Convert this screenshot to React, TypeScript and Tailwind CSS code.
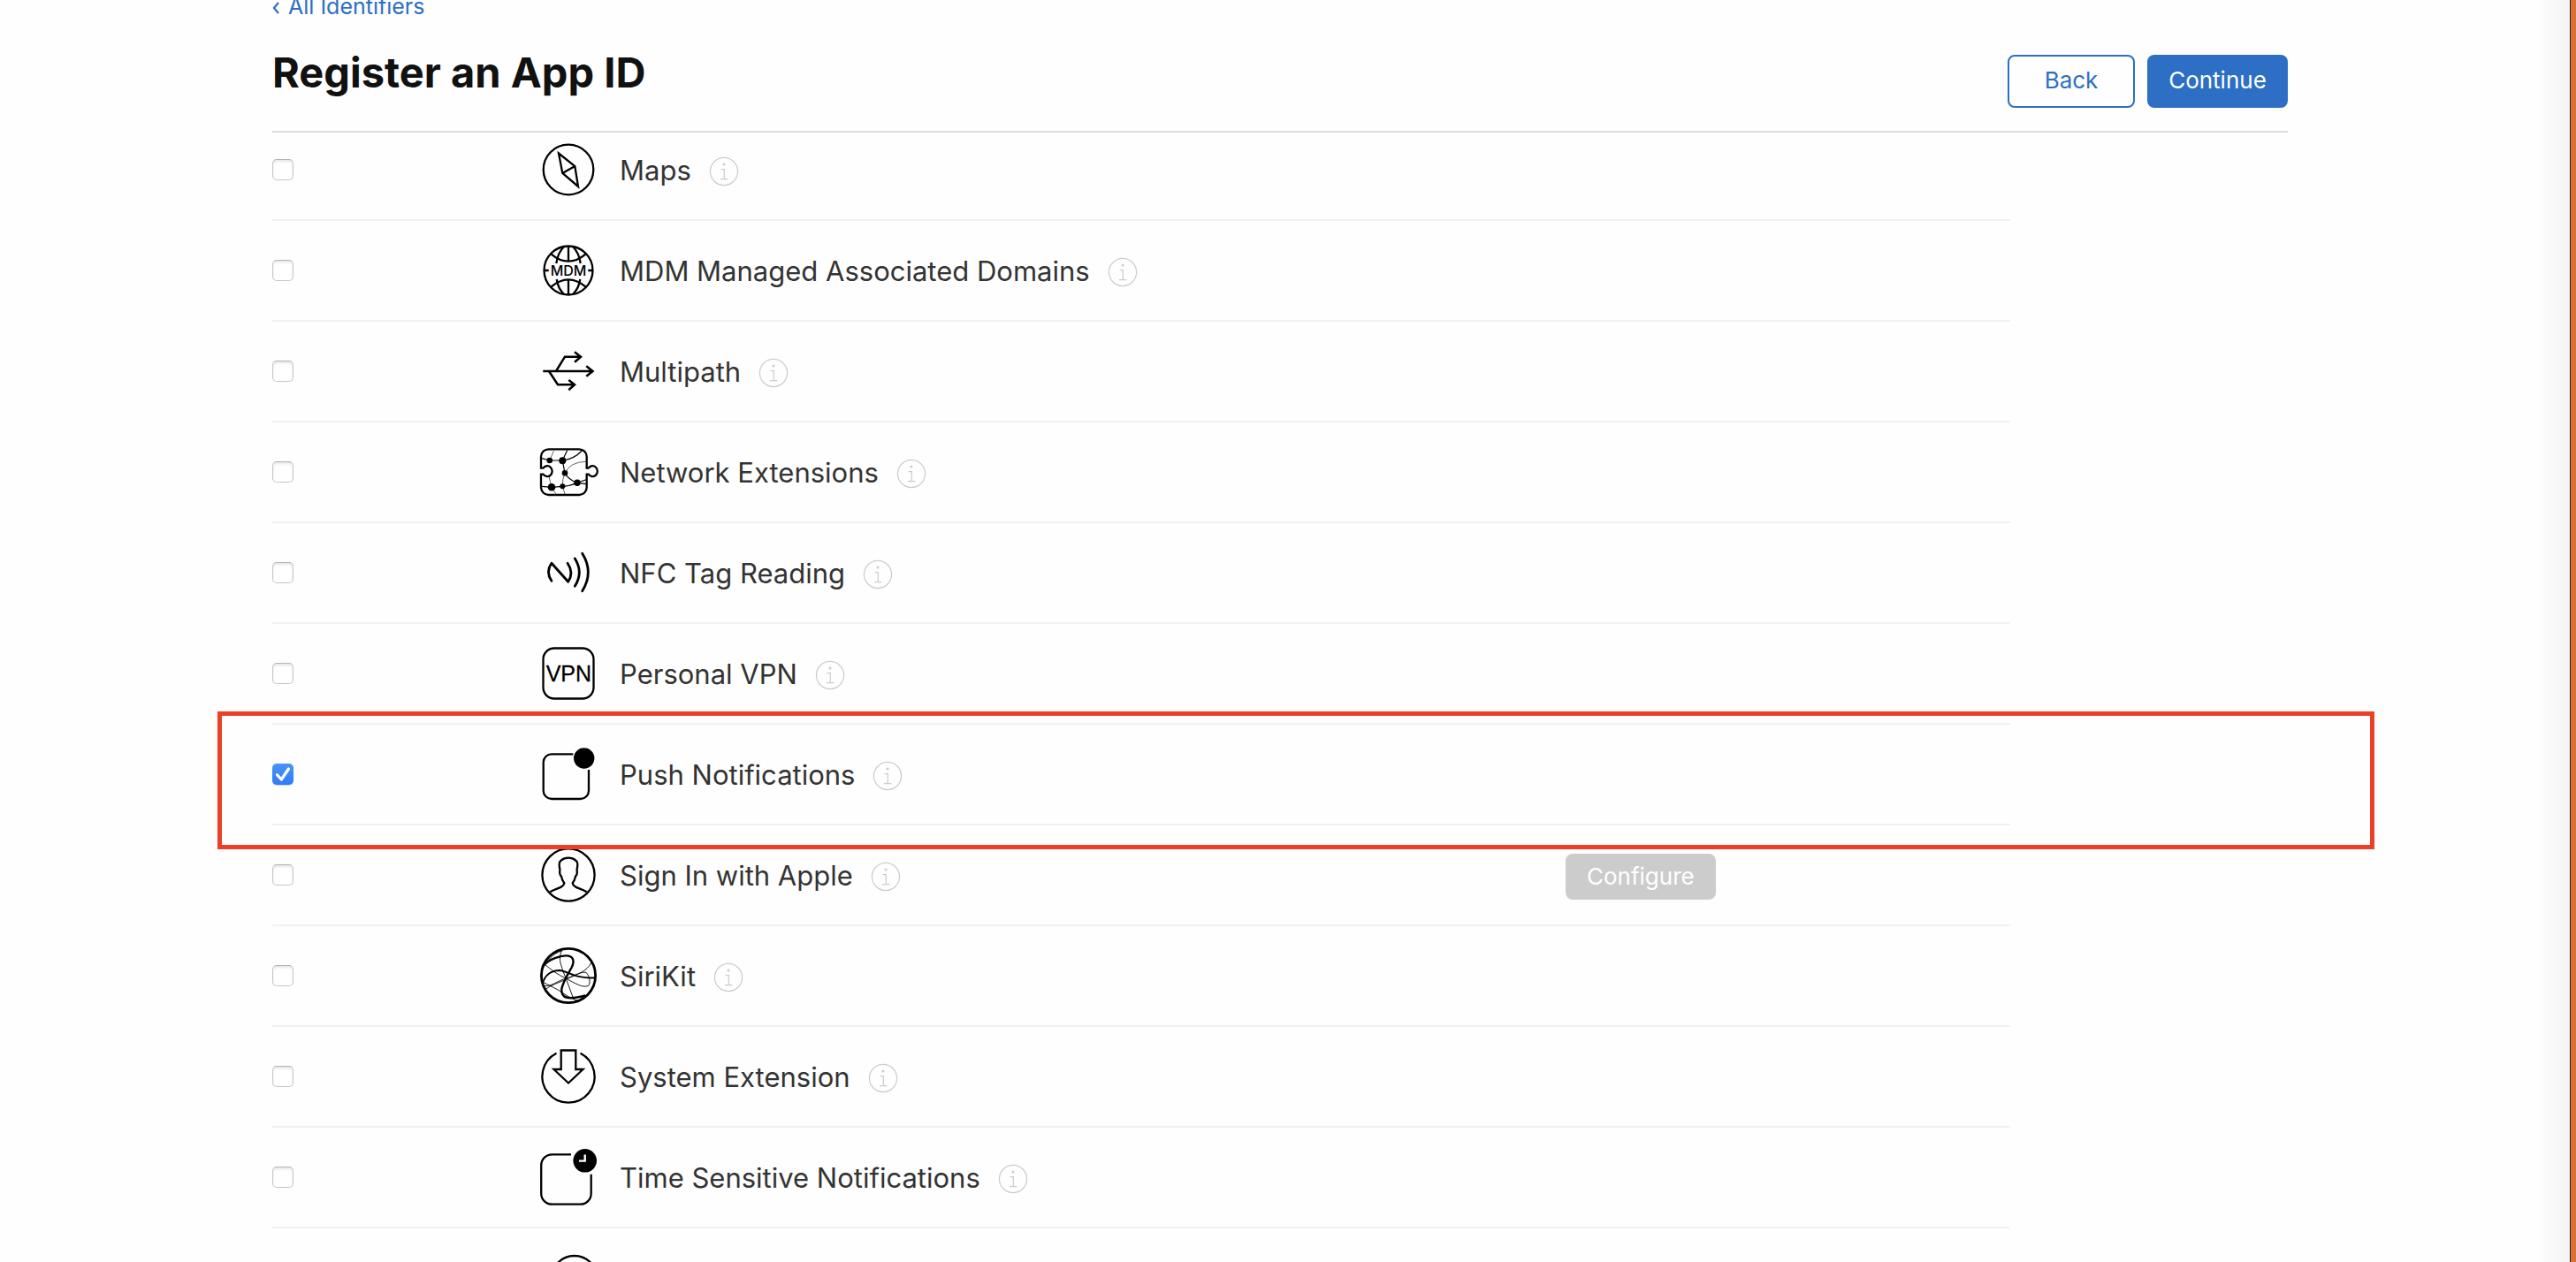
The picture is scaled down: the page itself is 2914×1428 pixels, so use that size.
import { useState, type ReactNode } from "react";

type Capability = {
  id: string;
  name: string;
  icon: ReactNode;
  configurable?: boolean;
  highlighted?: boolean;
};

function Glyph({ children, width = 2.3 }: { children: ReactNode; width?: number }) {
  return (
    <svg
      viewBox="0 0 64 64"
      className="size-16 shrink-0 overflow-visible"
      fill="none"
      stroke="#000"
      strokeWidth={width}
      aria-hidden="true"
    >
      {children}
    </svg>
  );
}

const MapsIcon = (
  <Glyph>
    <circle cx="32" cy="32" r="28.3" />
    <path d="M21 13.5 39.3 28 43 51 25.3 36Z M25.3 36 39.3 28" />
  </Glyph>
);

const MdmIcon = (
  <Glyph>
    <circle cx="32" cy="32" r="27.5" />
    <path d="M32 4.5V22M32 42V59.5M12.3 13.3Q32 30 51.7 13.3M12.3 50.7Q32 34 51.7 50.7" />
    <path d="M27 5Q20 12 18.3 24M37 5Q44 12 45.7 24M27 59Q20 52 18.7 42M37 59Q44 52 45.3 42" />
    <path d="M4 32H9.7M54.3 32H60" />
    <text
      x="32"
      y="38"
      textAnchor="middle"
      fill="#000"
      stroke="none"
      fontSize="16"
      className="font-['Inter',sans-serif] font-medium"
    >
      MDM
    </text>
  </Glyph>
);

const MultipathIcon = (
  <Glyph width={2.5}>
    <path d="M3.3 32H59.5M52.3 26.3 59.5 32 52.3 37.7" />
    <path d="M18.3 31.5 28 15.7H46M39 10.3 46 15.7 39 21.7" />
    <path d="M10 32 20 47.3H39M32.3 42 39 47.3 32.3 53.3" />
  </Glyph>
);

const NetworkIcon = (
  <Glyph>
    <path d="M9.5 6.3H44.2A8.5 8.5 0 0 1 52.7 14.8V27.7H54.7A5.6 6 0 1 1 54.7 34.7H52.7V49.5A8.5 8.5 0 0 1 44.2 58H9.5A8.5 8.5 0 0 1 1 49.5V34.7H3.5A5.6 6 0 1 0 3.5 27.7H1V14.8A8.5 8.5 0 0 1 9.5 6.3Z" />
    <path
      strokeWidth="1.2"
      d="M2 16.7 10.7 19H25.3L30.7 7.5M25.3 19.3Q39 17 47.3 8M25.3 19.3 28 33.3Q32 41 42 44.3L52 40.7M42 44.3 52 45.7M42 44.3Q34 48 25.3 48.3L13 49.3 2 48.3"
    />
    <path
      strokeWidth="0.6"
      d="M10.7 19 15.5 8M28 33.3Q34 20.5 52 20.3M28 33.3Q25 40 25.3 48.3L28 57M10 37.3 13 49.3 18 57"
    />
    <g fill="#000" stroke="none">
      <circle cx="10.7" cy="19" r="3.3" />
      <circle cx="25.3" cy="19.3" r="4" />
      <circle cx="28" cy="33.3" r="3.3" />
      <circle cx="42" cy="44.3" r="3.7" />
      <circle cx="13" cy="49.3" r="4.3" />
      <circle cx="25.3" cy="48.3" r="3" />
    </g>
  </Glyph>
);

const NfcIcon = (
  <Glyph width={2.8}>
    <g strokeLinecap="round" strokeLinejoin="round">
      <path d="M12.9 41.3Q6 31 12.9 21.3L31.7 42.3Q38.5 32 31 21.3" />
      <path d="M39.3 16Q49.3 31.5 39.3 47.3" />
      <path d="M47.7 10.3Q61 31.5 47.7 52.7" />
    </g>
  </Glyph>
);

const VpnIcon = (
  <Glyph>
    <rect x="3.5" y="3.5" width="57" height="57" rx="12.5" />
    <text
      x="32.4"
      y="41.3"
      textAnchor="middle"
      fill="#000"
      stroke="#000"
      strokeWidth="0.3"
      fontSize="25"
      className="font-['Liberation_Sans',sans-serif]"
    >
      VPN
    </text>
  </Glyph>
);

const PushIcon = (
  <Glyph>
    <path d="M37.3 9.3H13A9.3 9.3 0 0 0 3.7 18.6V50.7A9.3 9.3 0 0 0 13 60H45.7A9.3 9.3 0 0 0 55 50.7V27" />
    <circle cx="49.7" cy="14" r="11.7" fill="#000" stroke="none" />
  </Glyph>
);

const PersonIcon = (
  <Glyph>
    <circle cx="32" cy="32" r="29.6" />
    <path
      strokeLinejoin="round"
      d="M11.3 51.3C16 48 21 47.5 24.3 45.3Q27 43.5 27.3 41.3Q24.5 37.5 24 33.7Q21.5 31.5 22.4 26.3Q21.3 20 21.9 18.3Q22.3 16.5 23.7 15.7Q27 12.7 32 12.7Q37 12.7 40.3 15.7Q41.7 16.5 42.1 18.3Q42.7 20 41.6 26.3Q42.5 31.5 40 33.7Q39.5 37.5 36.7 41.3Q37 43.5 39.7 45.3C43 47.5 48 48 52.7 51.3"
    />
  </Glyph>
);

const SiriIcon = (
  <Glyph>
    <circle cx="32" cy="32" r="30.6" strokeWidth="2.8" />
    <path
      strokeWidth="2.4"
      d="M2.5 22C9 13 24 8.5 32 9.6C38 11 39 16 35.5 23C31 31 26 39 24.3 47C23.5 58 32 59.5 51 54.500"
    />
    <path strokeWidth="1.9" d="M3 41C5 31 13 26 22 26C31 27 42 36 62 34.3" />
    <path
      strokeWidth="0.9"
      d="M25 3C20 11 23 18 26 27C30 37 34 48 38 59M5 19C12 25 20 31 29 35C40 41 48 46 54.500 43.500C57 41 56.500 33 52 28.300C46 27.500 40 31 30 36C20 40 12 43 5 48M58 17C53 27 42 31 30 35C20 37 12 46 3 43M2 39C9 42 16 46 21 48.500C28 53 34 58 42 60M2 26C8 14 15 7 24 4"
    />
  </Glyph>
);

const SystemIcon = (
  <Glyph>
    <path d="M18.5 5.7A29.6 29.6 0 1 0 45.5 5.7" />
    <path d="M23.7 2.5H40.3V24H48.5L32 39.500 15.5 24H23.7Z" />
  </Glyph>
);

const TimeIcon = (
  <Glyph>
    <path d="M35 6.3H13.5A12.3 12.3 0 0 0 1.2 18.6V50.4A12.3 12.3 0 0 0 13.5 62.7H45.4A12.3 12.3 0 0 0 57.7 50.4V28.7" />
    <circle cx="50.7" cy="13.3" r="13.3" fill="#000" stroke="none" />
    <path stroke="#fff" strokeWidth="2.4" d="M50.7 6.5V13.6H44" />
  </Glyph>
);

const capabilities: Capability[] = [
  { id: "maps", name: "Maps", icon: MapsIcon },
  { id: "mdm", name: "MDM Managed Associated Domains", icon: MdmIcon },
  { id: "multipath", name: "Multipath", icon: MultipathIcon },
  { id: "network", name: "Network Extensions", icon: NetworkIcon },
  { id: "nfc", name: "NFC Tag Reading", icon: NfcIcon },
  { id: "vpn", name: "Personal VPN", icon: VpnIcon },
  { id: "push", name: "Push Notifications", icon: PushIcon, highlighted: true },
  { id: "signin", name: "Sign In with Apple", icon: PersonIcon, configurable: true },
  { id: "siri", name: "SiriKit", icon: SiriIcon },
  { id: "system", name: "System Extension", icon: SystemIcon },
  { id: "time", name: "Time Sensitive Notifications", icon: TimeIcon },
];

function InfoButton({ name }: { name: string }) {
  return (
    <button type="button" aria-label={`About ${name}`} className="mt-1 ml-5 shrink-0">
      <svg viewBox="0 0 34 34" className="size-[34px]" fill="none" stroke="#cccccc" strokeWidth="1.2" aria-hidden="true">
        <circle cx="17" cy="17" r="15.6" />
        <circle cx="17" cy="9" r="1.5" fill="#cccccc" stroke="none" />
        <path d="M13.6 14.7H17.3V25.6M13 25.6H21.4" />
      </svg>
    </button>
  );
}

function Checkbox({ id, checked, onChange }: { id: string; checked: boolean; onChange: () => void }) {
  return (
    <span className="grid size-6 place-items-center">
      <input
        id={id}
        type="checkbox"
        checked={checked}
        onChange={onChange}
        className="col-start-1 row-start-1 size-6 appearance-none rounded-[5px] border border-[#c6c6c6] border-t-[#b4b4b4] bg-white shadow-[inset_0_2px_3px_rgba(0,0,0,0.1)] checked:border-0 checked:bg-linear-to-b checked:from-[#4a93f8] checked:to-[#2f7bf5] checked:shadow-[0_1px_1px_rgba(47,123,245,0.3)]"
      />
      {checked && (
        <svg
          viewBox="0 0 24 24"
          className="pointer-events-none col-start-1 row-start-1 size-6"
          fill="none"
          stroke="#fff"
          strokeWidth="3.2"
          strokeLinecap="round"
          strokeLinejoin="round"
          aria-hidden="true"
        >
          <path d="M5.500 12.700 10.300 18 18.500 6" />
        </svg>
      )}
    </span>
  );
}

function CapabilityRow({
  item,
  checked,
  onToggle,
}: {
  item: Capability;
  checked: boolean;
  onToggle: () => void;
}) {
  return (
    <li className="relative">
      <div className="mr-[314px] grid h-[114px] grid-cols-[303px_1fr_503px] items-center border-b-2 border-[#f1f1f1]">
        <Checkbox id={item.id} checked={checked} onChange={onToggle} />
        <div className="flex items-center">
          {item.icon}
          <label htmlFor={item.id} className="mt-0.5 ml-[26px] text-[31px] leading-10 whitespace-nowrap text-[#333333]">
            {item.name}
          </label>
          <InfoButton name={item.name} />
        </div>
        {item.configurable && (
          <button
            type="button"
            disabled
            className="mt-1 h-[52px] justify-self-start rounded-lg bg-[#cccccc] px-6 text-[26px] leading-8 text-white"
          >
            Configure
          </button>
        )}
      </div>
      {item.highlighted && (
        <div className="pointer-events-none absolute -top-[15px] -right-[98px] -bottom-[27px] -left-[62px] z-10 border-[5px] border-[#ec4026]" />
      )}
    </li>
  );
}

export default function App() {
  const [selected, setSelected] = useState<string[]>(["push"]);
  const toggle = (id: string) =>
    setSelected((ids) => (ids.includes(id) ? ids.filter((other) => other !== id) : [...ids, id]));

  return (
    <div className="flex h-screen overflow-hidden bg-[#fefefe] font-['Inter','Liberation_Sans',sans-serif]">
      <div className="min-w-0 flex-1 bg-linear-to-l from-[#f3f3f3] to-[#fefefe] to-[38px] pr-[11px]">
        <div className="mx-auto max-w-[2280px]">
          <header className="relative z-10 flex h-[150px] flex-col border-b-2 border-[#dddddd] bg-[#fefefe]">
            <a href="#identifiers" className="-mt-[9px] flex h-8 items-center self-start text-[25px] leading-8 text-[#2d6fc4]">
              <svg viewBox="0 0 8 14" className="mt-1 mr-2.5 h-3.5 w-2" fill="none" stroke="currentColor" strokeWidth="2.2" aria-hidden="true">
                <path d="M7 1 2 7 7 13" />
              </svg>
              All Identifiers
            </a>
            <div className="flex items-start justify-between pt-[29px]">
              <h1 className="text-[47px] leading-[60px] font-bold text-[#111111]">Register an App ID</h1>
              <div className="mt-2.5 flex gap-3.5">
                <button
                  type="button"
                  className="h-[60px] w-36 rounded-lg border-2 border-[#2d6fc4] pb-0.5 text-[26px] leading-8 text-[#2d6fc4]"
                >
                  Back
                </button>
                <button type="button" className="h-[60px] w-[159px] rounded-lg bg-[#2d6fc4] pb-0.5 text-[26px] leading-8 text-white">
                  Continue
                </button>
              </div>
            </div>
          </header>
          <ul className="-mt-3.5">
            {capabilities.map((item) => (
              <CapabilityRow
                key={item.id}
                item={item}
                checked={selected.includes(item.id)}
                onToggle={() => toggle(item.id)}
              />
            ))}
            <li className="mr-[314px] flex h-[114px] items-center pl-[303px]">
              <Glyph>
                <circle cx="38.7" cy="32" r="26" />
              </Glyph>
            </li>
          </ul>
        </div>
      </div>
      <div className="w-[7px] shrink-0 border-l border-[#222222] bg-[#dc7036]" />
    </div>
  );
}
